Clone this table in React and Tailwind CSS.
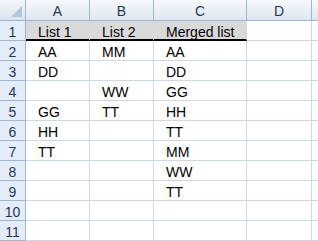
import React from "react";

const cols = ["A", "B", "C", "D", ""];
const data = [
  ["List 1", "List 2", "Merged list"],
  ["AA", "MM", "AA"],
  ["DD", "", "DD"],
  ["", "WW", "GG"],
  ["GG", "TT", "HH"],
  ["HH", "", "TT"],
  ["TT", "", "MM"],
  ["", "", "WW"],
  ["", "", "TT"],
  ["", "", ""],
  ["", "", ""],
];

export default function App() {
  return (
    <div
      className="w-[318px] h-[241px] overflow-hidden bg-white text-[14px] text-black"
      style={{ fontFamily: '"Liberation Sans", Arial, sans-serif' }}
    >
      <div className="grid grid-cols-[26px_64px_64px_93px_65px_1fr] auto-rows-[20px] grid-rows-[21px]">
        {/* corner */}
        <div className="relative h-[21px] border-r border-b border-[#9eb6ce] bg-gradient-to-b from-[#f3f6fa] to-[#dbe4ee]">
          <svg className="absolute right-[3px] bottom-[3px]" width="11" height="11" viewBox="0 0 11 11">
            <polygon points="11,0 11,11 0,11" fill="#b6c6d8" />
          </svg>
        </div>
        {cols.map((c, i) => (
          <div
            key={"h" + i}
            className={`h-[21px] ${i < 4 ? "border-r" : ""} border-b border-[#9eb6ce] bg-gradient-to-b from-[#f7f9fc] to-[#dee6f0] text-center text-[#1e395b] pt-[2px] leading-[18px]`}
          >
            {c}
          </div>
        ))}
        {data.map((row, r) => (
          <React.Fragment key={"r" + r}>
            <div className="h-[20px] border-r border-b border-[#9eb6ce] bg-[#e4ecf7] text-center text-[#1e395b] pt-[2px] leading-[18px]">
              {r + 1}
            </div>
            {[0, 1, 2, 3, 4].map((ci) => {
              const v = ci < 3 ? row[ci] : "";
              const head = r === 0 && ci < 3;
              return (
                <div
                  key={"c" + ci}
                  className={`h-[20px] overflow-hidden whitespace-nowrap pl-[12px] pt-[2px] leading-[18px] ${
                    ci < 4 ? "border-r" : ""
                  } ${
                    head
                      ? "bg-[#d9d9d9] border-r-[#d9d9d9] border-b-2 border-b-black"
                      : "border-b border-[#d0d7e5]"
                  }`}
                >
                  {v}
                </div>
              );
            })}
          </React.Fragment>
        ))}
      </div>
    </div>
  );
}
